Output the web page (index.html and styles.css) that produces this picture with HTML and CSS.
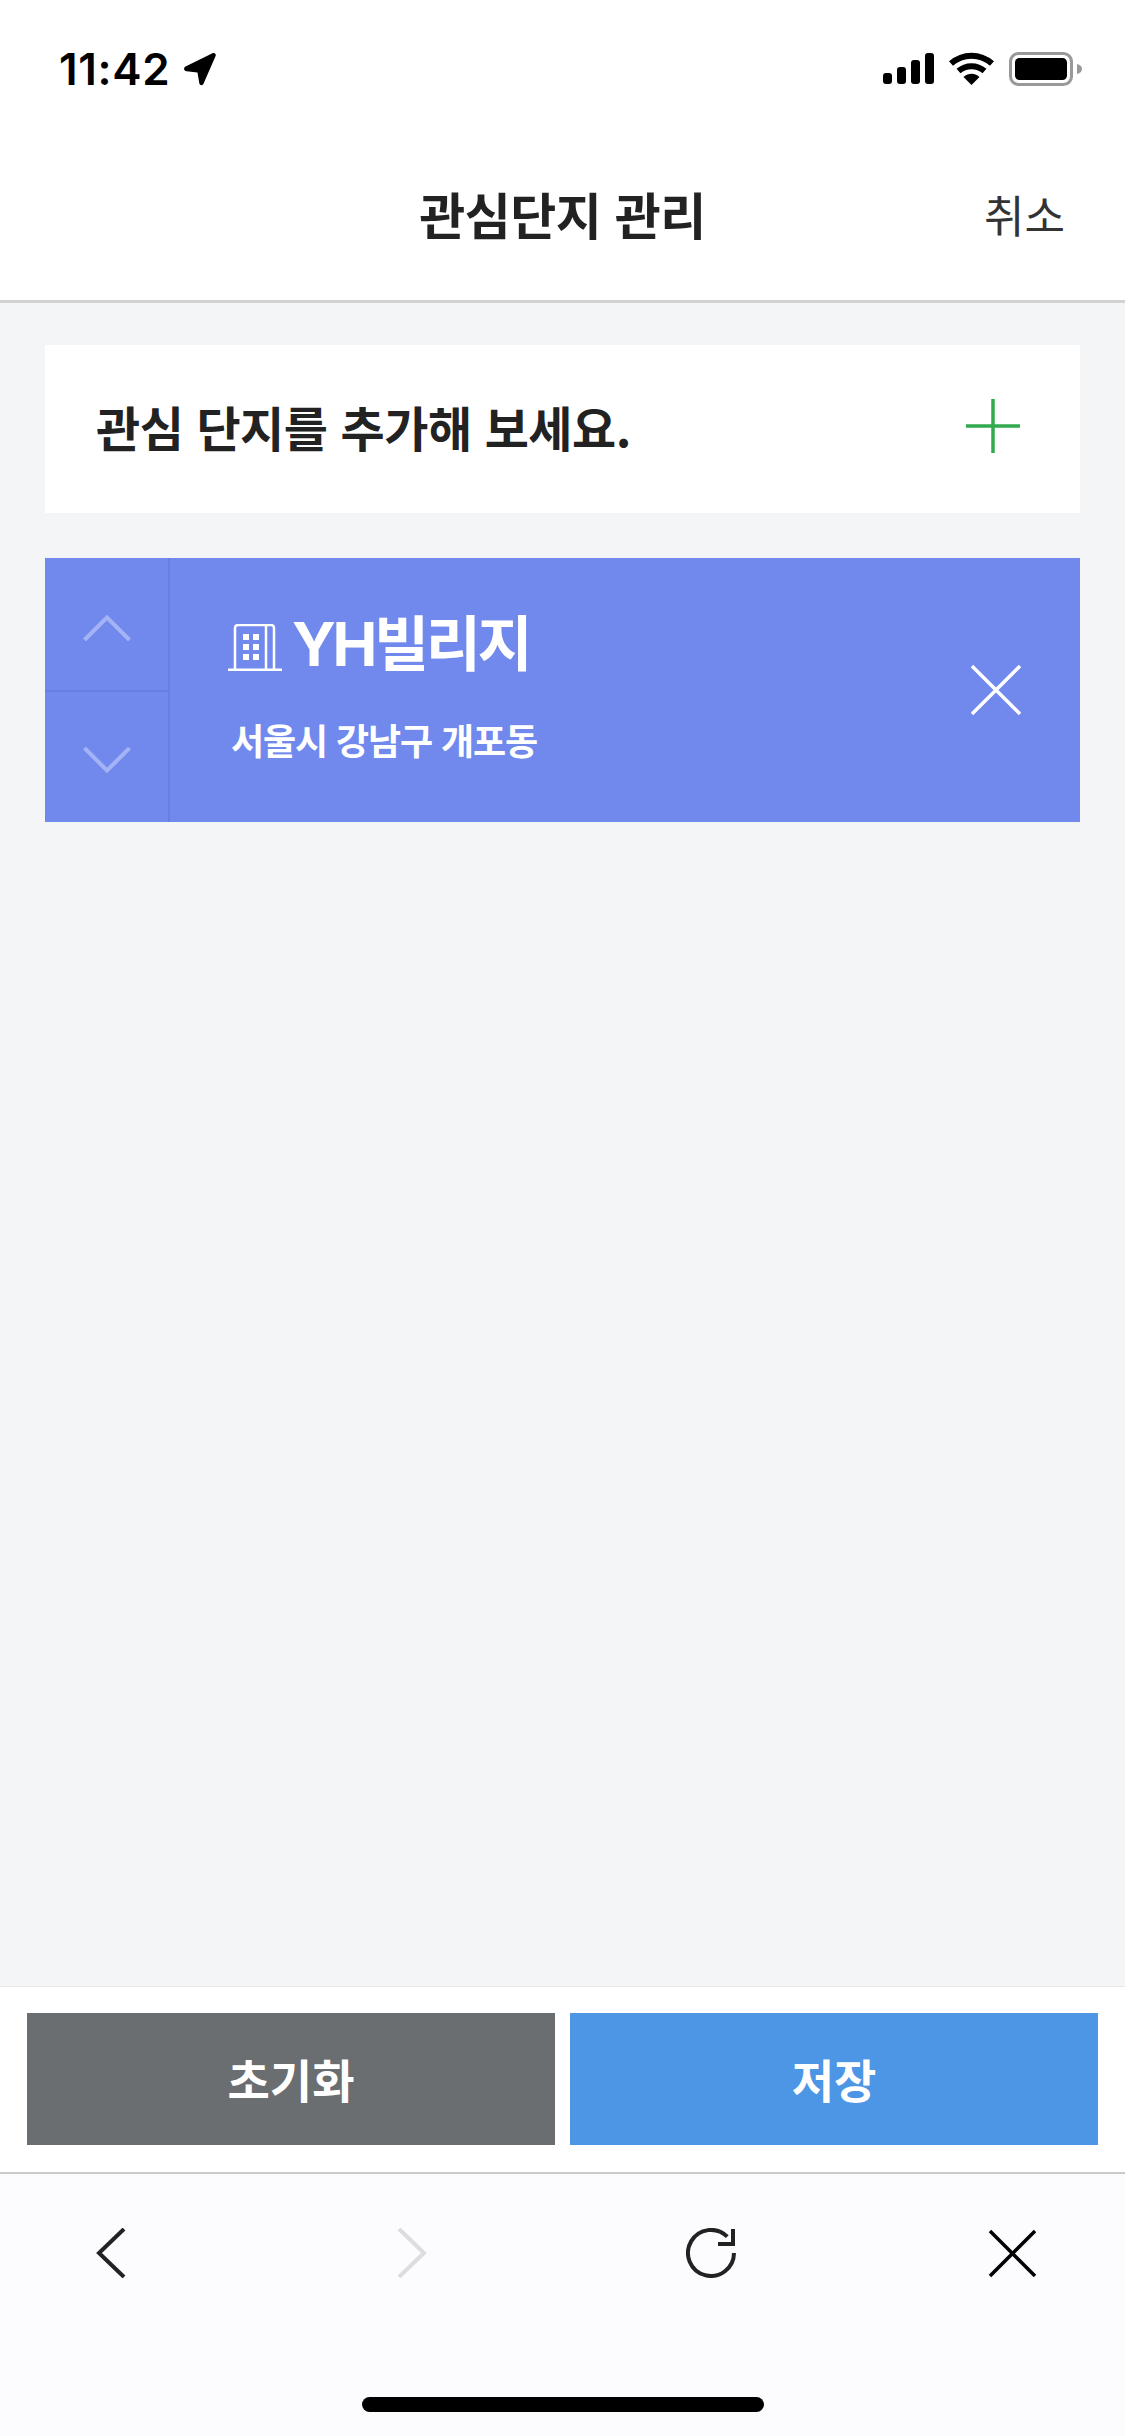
FILE: index.html
```html
<!DOCTYPE html>
<html lang="ko">
<head>
    <meta charset="UTF-8">
    <title>관심단지 관리</title>
    <link rel="stylesheet" href="styles.css">
</head>
<body>
    <div class="phone">
        <div class="status-bar">
            <div class="status-left">
                <span class="time">11:42</span>
                <svg class="ico-location" viewBox="0 0 34 34"><path d="M2.500 14.500 29.500 1.200c2-1 4 .8 3.100 2.900L20.500 31.800c-1 2.200-3.700 1.800-4.200-.5L14.500 20.500 3.500 19.200c-2.700-.4-3.300-3.500-1-4.700z" fill="#000"/></svg>
            </div>
            <div class="status-right">
                <svg class="ico-signal" viewBox="0 0 51 31">
                    <rect x="0" y="20" width="9" height="11" rx="3"/>
                    <rect x="14" y="14" width="9" height="17" rx="3"/>
                    <rect x="28" y="7" width="9" height="24" rx="3"/>
                    <rect x="42" y="0" width="9" height="31" rx="3"/>
                </svg>
                <svg class="ico-wifi" viewBox="0 0 45 33">
                    <path d="M2 11.500C14 1 31 1 43 11.500" fill="none" stroke="#000" stroke-width="6"/>
                    <path d="M9.500 19C17 12.500 28 12.500 35.500 19" fill="none" stroke="#000" stroke-width="6"/>
                    <path d="M14.500 25C19.500 20.800 25.500 20.800 30.500 25L22.500 33z" fill="#000"/>
                </svg>
                <svg class="ico-battery" viewBox="0 0 73 34">
                    <rect x="1.500" y="1.500" width="61" height="31" rx="8" fill="none" stroke="#999" stroke-width="3"/>
                    <rect x="6" y="6" width="52" height="22" rx="4.500" fill="#000"/>
                    <path d="M68 12c3 .6 5 2.500 5 5s-2 4.400-5 5z" fill="#999"/>
                </svg>
            </div>
        </div>

        <header class="top-nav">
            <h1 class="top-nav-title">관심단지 관리</h1>
            <a class="top-nav-cancel">취소</a>
        </header>

        <main class="content">
            <div class="add-card">
                <span class="add-card-text">관심 단지를 추가해 보세요.</span>
                <svg class="ico-plus" viewBox="0 0 54 54"><path d="M27 0v54M0 27h54" fill="none" stroke="#31aa4e" stroke-width="3.500"/></svg>
            </div>

            <div class="item-card">
                <div class="item-order">
                    <div class="item-order-btn">
                        <svg class="ico-arrow" viewBox="0 0 48 26"><path d="M1.500 25 24 2.500 46.500 25" fill="none" stroke="#a3b3f5" stroke-width="4"/></svg>
                    </div>
                    <div class="item-order-btn">
                        <svg class="ico-arrow" viewBox="0 0 48 26"><path d="M1.500 1 24 23.500 46.500 1" fill="none" stroke="#a3b3f5" stroke-width="4"/></svg>
                    </div>
                </div>
                <div class="item-body">
                    <div class="item-title">
                        <svg class="ico-building" viewBox="0 0 54 47" fill="none" stroke="#fff" stroke-width="2.500">
                            <path d="M0 45.700h54M7 46V4c0-1.700 1-3 3-3h33c2 0 3 1.300 3 3v42M38 2v44"/>
                            <g fill="#fff" stroke="none">
                                <rect x="15" y="10" width="6" height="6"/><rect x="25" y="10" width="6" height="6"/>
                                <rect x="15" y="20" width="6" height="6"/><rect x="25" y="20" width="6" height="6"/>
                                <rect x="15" y="30" width="6" height="6"/><rect x="25" y="30" width="6" height="6"/>
                            </g>
                        </svg>
                        <span class="item-name">YH빌리지</span>
                    </div>
                    <div class="item-addr">서울시 강남구 개포동</div>
                </div>
                <svg class="ico-remove" viewBox="0 0 51 51"><path d="M1 1l49 49M50 1 1 50" fill="none" stroke="#fff" stroke-width="3.500"/></svg>
            </div>
        </main>

        <div class="actions">
            <button class="btn btn-reset">초기화</button>
            <button class="btn btn-save">저장</button>
        </div>

        <div class="toolbar">
            <div class="toolbar-icons">
                <svg class="ico-nav" viewBox="0 0 50 50"><path d="M38 1 13 25l25 24" fill="none" stroke="#222" stroke-width="4"/></svg>
                <svg class="ico-nav" viewBox="0 0 50 50"><path d="M13 1l25 24-25 24" fill="none" stroke="#ddd" stroke-width="4"/></svg>
                <svg class="ico-nav" viewBox="0 0 50 50"><path d="M41.300 8.700A23 23 0 1 0 48 25" fill="none" stroke="#222" stroke-width="4"/><path d="M47 1v15H32" fill="none" stroke="#222" stroke-width="4"/></svg>
                <svg class="ico-nav" viewBox="0 0 50 50"><path d="M4 3l45 45M49 3 4 48" fill="none" stroke="#000" stroke-width="3.500"/></svg>
            </div>
            <div class="home-indicator"></div>
        </div>
    </div>
</body>
</html>
```

FILE: styles.css
```css
* {
    box-sizing: border-box;
}
body {
    margin: 0;
    font-family: "Noto Sans CJK KR", "Noto Sans", sans-serif;
    background-color: #fff;
}
.phone {
    width: 1125px;
    height: 2436px;
    display: flex;
    flex-direction: column;
    overflow: hidden;
}

/* status bar */
.status-bar {
    height: 132px;
    padding: 52px 43px 0 59px;
    display: flex;
    justify-content: space-between;
    align-items: flex-start;
}
.status-left {
    display: flex;
    align-items: center;
    gap: 13px;
    height: 34px;
}
.time {
    font-family: Inter, sans-serif;
    font-size: 44px;
    font-weight: 600;
    line-height: 34px;
    letter-spacing: 0.7px;
    color: #000;
}
.ico-location {
    width: 34px;
    height: 34px;
}
.status-right {
    display: flex;
    align-items: flex-start;
    gap: 15px;
}
.ico-signal {
    width: 51px;
    height: 31px;
    margin-top: 1px;
}
.ico-wifi {
    width: 45px;
    height: 33px;
}
.ico-battery {
    width: 73px;
    height: 34px;
}

/* top nav */
.top-nav {
    height: 171px;
    padding-right: 60px;
    border-bottom: 3px solid #d0d2d4;
    display: flex;
    align-items: center;
    justify-content: flex-end;
    position: relative;
}
.top-nav-title {
    position: absolute;
    left: 0;
    right: 0;
    margin: 0;
    padding-bottom: 6px;
    text-align: center;
    font-size: 50px;
    font-weight: 700;
    letter-spacing: -0.5px;
    color: #222;
}
.top-nav-cancel {
    padding-bottom: 4px;
    font-size: 44px;
    color: #333;
}

/* list */
.content {
    flex: 1;
    padding: 42px 45px 0;
    background-color: #f4f5f7;
}
.add-card {
    height: 168px;
    padding: 0 60px 0 51px;
    background-color: #fff;
    display: flex;
    align-items: center;
    justify-content: space-between;
}
.add-card-text {
    padding-bottom: 7px;
    font-size: 48px;
    font-weight: 700;
    letter-spacing: -0.45px;
    color: #222;
}
.ico-plus {
    width: 54px;
    height: 54px;
    margin-bottom: 6px;
}
.item-card {
    margin-top: 45px;
    height: 264px;
    background-color: #7189ed;
    display: flex;
    align-items: center;
    padding-right: 59px;
}
.item-order {
    width: 125px;
    height: 100%;
    border-right: 2px solid #6680e0;
    display: flex;
    flex-direction: column;
}
.item-order-btn {
    flex: 1;
    padding-top: 8px;
    display: flex;
    align-items: center;
    justify-content: center;
}
.item-order-btn + .item-order-btn {
    border-top: 2px solid #6680e0;
    padding-top: 6px;
}
.ico-arrow {
    width: 48px;
    height: 26px;
}
.item-body {
    flex: 1;
    align-self: flex-start;
    padding: 54px 0 0 58px;
    color: #fff;
}
.item-title {
    display: flex;
    align-items: center;
    gap: 10px;
    height: 70px;
    font-family: Inter, "Noto Sans CJK KR", sans-serif;
    font-size: 60px;
    font-weight: 700;
    letter-spacing: -3.4px;
}
.item-name {
    line-height: 70px;
    padding-bottom: 6px;
}
.ico-building {
    width: 54px;
    height: 47px;
}
.item-addr {
    margin: 32px 0 0 3px;
    line-height: 50px;
    font-size: 36px;
    font-weight: 700;
    letter-spacing: -1.1px;
}
.ico-remove {
    width: 50px;
    height: 50px;
}

/* bottom buttons */
.actions {
    height: 188px;
    padding: 26px 27px 27px;
    background-color: #fff;
    border-top: 1px solid #e6e7e9;
    border-bottom: 2px solid #c9cacc;
    display: flex;
    gap: 15px;
}
.btn {
    flex: 1;
    border: none;
    padding: 0 0 2px;
    color: #fff;
    font-family: inherit;
    font-size: 46px;
    font-weight: 700;
}
.btn-reset {
    background-color: #6b6e71;
}
.btn-save {
    background-color: #4d96e6;
}

/* browser toolbar */
.toolbar {
    height: 262px;
    background-color: #fcfcfe;
    padding-top: 54px;
    display: flex;
    flex-direction: column;
    align-items: center;
}
.toolbar-icons {
    width: 100%;
    padding: 0 89px 0 86px;
    display: flex;
    justify-content: space-between;
}
.ico-nav {
    width: 50px;
    height: 50px;
}
.home-indicator {
    margin-top: 119px;
    width: 402px;
    height: 15px;
    border-radius: 8px;
    background-color: #000;
}
```
